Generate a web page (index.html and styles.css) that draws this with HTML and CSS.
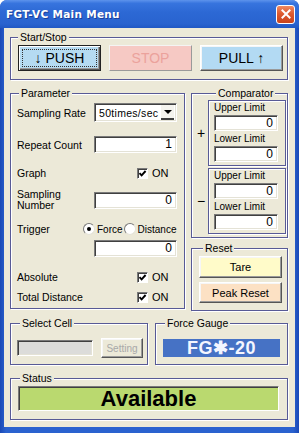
FILE: index.html
```html
<!DOCTYPE html>
<html lang="en">
<head>
  <meta charset="UTF-8" />
  <title>FGT-VC Main Menu</title>
  <link rel="stylesheet" href="styles.css">
</head>
<body>

<div class="window">
  <!-- Title bar -->
  <div class="titlebar">
    <span class="title">FGT-VC Main Menu</span>
    <span class="close-btn">
      <svg viewBox="0 0 18 18" width="16" height="16">
        <path d="M5 5L13 13M13 5L5 13" stroke="#fff" stroke-width="2.2" stroke-linecap="square"/>
      </svg>
    </span>
  </div>

  <div class="client">

    <!-- Start/Stop -->
    <fieldset class="group group-start">
      <legend>Start/Stop</legend>
      <div class="start-row">
        <button class="btn btn-big btn-push"><span class="focus-rect">↓ PUSH</span></button>
        <button class="btn btn-big btn-stop" disabled>STOP</button>
        <button class="btn btn-big btn-pull">PULL ↑</button>
      </div>
    </fieldset>

    <div class="middle">
      <!-- Parameter -->
      <fieldset class="group group-param">
        <legend>Parameter</legend>

        <div class="prow prow-first">
          <span class="plabel">Sampling Rate</span>
          <div class="select">
            <span class="select-val">50times/sec</span>
            <span class="select-arrow"></span>
          </div>
        </div>

        <div class="prow prow-count">
          <span class="plabel">Repeat Count</span>
          <div class="field">1</div>
        </div>

        <div class="prow">
          <span class="plabel">Graph</span>
          <span class="check">
            <span class="checkbox">
              <svg viewBox="0 0 9 9" width="9" height="9"><path d="M1.5 4.2L3.6 6.4L7.6 2" stroke="#000" stroke-width="1.9" fill="none"/></svg>
            </span>ON
          </span>
        </div>

        <div class="prow prow-two">
          <span class="plabel">Sampling<br>Number</span>
          <div class="field">0</div>
        </div>

        <div class="prow prow-trigger">
          <span class="plabel plabel-short">Trigger</span>
          <span class="radio radio-on"></span>
          <span class="radio-text">Force</span>
          <span class="radio"></span>
          <span class="radio-text">Distance</span>
        </div>

        <div class="prow prow-tight">
          <span class="plabel"></span>
          <div class="field">0</div>
        </div>

        <div class="prow">
          <span class="plabel">Absolute</span>
          <span class="check">
            <span class="checkbox">
              <svg viewBox="0 0 9 9" width="9" height="9"><path d="M1.5 4.2L3.6 6.4L7.6 2" stroke="#000" stroke-width="1.9" fill="none"/></svg>
            </span>ON
          </span>
        </div>

        <div class="prow prow-last">
          <span class="plabel">Total Distance</span>
          <span class="check">
            <span class="checkbox">
              <svg viewBox="0 0 9 9" width="9" height="9"><path d="M1.5 4.2L3.6 6.4L7.6 2" stroke="#000" stroke-width="1.9" fill="none"/></svg>
            </span>ON
          </span>
        </div>
      </fieldset>

      <div class="side">
        <!-- Comparator -->
        <fieldset class="group group-comp">
          <legend>Comparator</legend>
          <div class="comp-row">
            <span class="comp-sign">+</span>
            <div class="comp-box">
              <span class="comp-label">Upper Limit</span>
              <div class="field field-small">0</div>
              <span class="comp-label">Lower Limit</span>
              <div class="field field-small">0</div>
            </div>
          </div>
          <div class="comp-row">
            <span class="comp-sign">−</span>
            <div class="comp-box">
              <span class="comp-label">Upper Limit</span>
              <div class="field field-small">0</div>
              <span class="comp-label">Lower Limit</span>
              <div class="field field-small">0</div>
            </div>
          </div>
        </fieldset>

        <!-- Reset -->
        <fieldset class="group group-reset">
          <legend>Reset</legend>
          <button class="btn btn-reset btn-tare">Tare</button>
          <button class="btn btn-reset btn-peak">Peak Reset</button>
        </fieldset>
      </div>
    </div>

    <div class="bottom">
      <!-- Select Cell -->
      <fieldset class="group group-cell">
        <legend>Select Cell</legend>
        <div class="cell-row">
          <div class="field field-disabled"></div>
          <button class="btn btn-setting" disabled>Setting</button>
        </div>
      </fieldset>

      <!-- Force Gauge -->
      <fieldset class="group group-gauge">
        <legend>Force Gauge</legend>
        <div class="gauge">FG✱-20</div>
      </fieldset>
    </div>

    <!-- Status -->
    <fieldset class="group group-status">
      <legend>Status</legend>
      <div class="status-box">Available</div>
    </fieldset>

  </div>
</div>

</body>
</html>
```

FILE: styles.css
```css
* { box-sizing: border-box; margin: 0; padding: 0; }
body {
  margin: 0;
  background: #fff;
  font-family: 'Liberation Sans', Arial, sans-serif;
  font-size: 10px;
  color: #000;
}

/* WINDOW */
.window {
  width: 299px;
  height: 433px;
  display: flex;
  flex-direction: column;
  background: linear-gradient(90deg, #1a49b6 0%, #2a62cf 2%, #2a62cf 98%, #1a49b6 100%);
  border-radius: 7px 7px 0 0;
  overflow: hidden;
}
.titlebar {
  height: 28px;
  flex: none;
  display: flex;
  align-items: center;
  justify-content: space-between;
  padding: 0 4px 0 6px;
  background: linear-gradient(180deg, #5d93ec 0%, #3774de 12%, #2c68d4 45%, #2963cf 85%, #2058c4 100%);
}
.title {
  color: #fff;
  font-family: 'DejaVu Sans', sans-serif;
  font-weight: bold;
  font-size: 10.5px;
  letter-spacing: 0.3px;
  text-shadow: 1px 1px 0 #1a3f99;
}
.close-btn {
  width: 19px;
  height: 19px;
  display: flex;
  align-items: center;
  justify-content: center;
  border: 1px solid #fff;
  border-radius: 3px;
  background: linear-gradient(180deg, #f08a62 0%, #dd5a30 45%, #c8431c 100%);
}

.client {
  flex: 1;
  margin: 0 4px 6px;
  padding: 3px 7px 0 6px;
  background: #ECE9D8;
}

/* GROUP BOXES */
.group {
  border: 1px solid #585a96;
  box-shadow: inset 1px 1px 0 #fff, 1px 1px 0 #fff;
  min-width: 0;
}
.group legend {
  padding: 0 2px;
  font-size: 10.5px;
  line-height: 13px;
  background: #ECE9D8;
}

.group-start {
  padding: 1px 4px 8px 7px;
}
.start-row {
  display: grid;
  grid-template-columns: repeat(3, 83px);
  gap: 8px;
}

/* BUTTONS */
.btn {
  font-family: inherit;
  font-size: 11px;
  color: #000;
  border: 1px solid;
  border-color: #fff #555 #555 #fff;
  box-shadow: inset -1px -1px 0 #9a9a9a, inset 1px 1px 0 #f6f6f6;
  cursor: pointer;
}
.btn-big {
  height: 26px;
  font-size: 14px;
  display: flex;
  align-items: center;
  justify-content: center;
}
.btn-push {
  background: #B5DBF2;
  border: 1px solid #222;
  box-shadow: inset 1px 1px 0 #fff, inset -1px -1px 0 #555, inset -2px -2px 0 #999;
  padding: 3px;
}
.focus-rect {
  flex: 1;
  align-self: stretch;
  display: flex;
  align-items: center;
  justify-content: center;
  border: 1px dotted #333;
}
.btn-stop {
  background: #F6C9C4;
  color: #EBA29C;
  border-color: #f4f4f4 #9a9a9a #9a9a9a #f4f4f4;
  box-shadow: none;
}
.btn-pull {
  background: #B3DAF3;
}

/* LAYOUT ROWS */
.middle {
  display: flex;
  align-items: flex-start;
  gap: 6px;
  margin-top: 7px;
}
.group-param {
  width: 175px;
  flex: none;
  padding: 0 6px 3px 6px;
}
.group-param legend { margin-left: 2px; }

.side {
  flex: 1;
  display: flex;
  flex-direction: column;
  gap: 4px;
}

/* PARAMETER */
.prow {
  display: flex;
  align-items: center;
  height: 16px;
  margin-top: 12px;
}
.prow-first { margin-top: 3px; height: 19px; }
.prow-count { margin-top: 14px; height: 17px; }
.prow-two { margin-top: 7px; height: 24px; line-height: 11px; }
.prow-trigger { margin-top: 9px; }
.prow-tight { margin-top: 3px; height: 17px; }
.prow-last { margin-top: 4px; }

.plabel {
  width: 77px;
  flex: none;
  font-size: 10.5px;
}
.plabel-short { width: 66px; }

.field {
  width: 83px;
  height: 17px;
  background: #fff;
  border: 1px solid;
  border-color: #7a7a7a #fff #fff #7a7a7a;
  box-shadow: inset 1px 1px 0 #404040, inset -1px -1px 0 #e4e2d6;
  text-align: right;
  padding: 0 4px;
  font-size: 12px;
  line-height: 15px;
}

.select {
  width: 83px;
  height: 19px;
  display: flex;
  align-items: center;
  justify-content: flex-end;
  background: #fff;
  border: 1px solid;
  border-color: #7a7a7a #fff #fff #7a7a7a;
  box-shadow: inset 1px 1px 0 #404040, inset -1px -1px 0 #e4e2d6;
  padding: 2px 2px 2px 4px;
  gap: 3px;
}
.select-val { font-size: 10.5px; letter-spacing: 0.3px; }
.select-arrow {
  position: relative;
  width: 13px;
  height: 15px;
  background: #f4f3ee;
  border-bottom: 2px solid #404040;
}
.select-arrow::after {
  content: '';
  position: absolute;
  left: 3px;
  top: 5px;
  border-left: 4px solid transparent;
  border-right: 4px solid transparent;
  border-top: 4px solid #000;
}

.check {
  display: flex;
  align-items: center;
  gap: 4px;
  margin-left: 43px;
  font-size: 11px;
}
.checkbox {
  width: 11px;
  height: 11px;
  display: flex;
  align-items: center;
  justify-content: center;
  background: #fff;
  border: 1px solid;
  border-color: #7a7a7a #fff #fff #7a7a7a;
  box-shadow: inset 1px 1px 0 #404040;
}

.radio {
  width: 12px;
  height: 12px;
  border-radius: 50%;
  background: #fff;
  border: 1px solid;
  border-color: #7a7a7a #e4e2d6 #e4e2d6 #7a7a7a;
  display: flex;
  align-items: center;
  justify-content: center;
  flex: none;
}
.radio-on::after {
  content: '';
  width: 4px;
  height: 4px;
  border-radius: 50%;
  background: #000;
}
.radio-text {
  margin: 0 1px 0 2px;
  font-size: 10px;
}

/* COMPARATOR */
.group-comp {
  padding: 0 1px 3px 2px;
  display: flex;
  flex-direction: column;
  gap: 2px;
}
.group-comp legend { margin-left: 22px; }
.comp-row {
  display: flex;
  align-items: center;
}
.comp-sign {
  width: 14px;
  text-align: center;
  font-size: 14px;
}
.comp-box {
  flex: 1;
  height: 66px;
  display: flex;
  flex-direction: column;
  justify-content: space-between;
  padding: 0 6px 3px 5px;
  border: 1px solid #585a96;
  box-shadow: inset 1px 1px 0 #fff, 1px 1px 0 #fff;
}
.comp-label { line-height: 13px; font-size: 10px; }
.field-small {
  width: 64px;
  height: 16px;
  line-height: 14px;
}

/* RESET */
.group-reset {
  padding: 1px 5px 7px 7px;
  display: flex;
  flex-direction: column;
  gap: 4px;
}
.group-reset legend { margin-left: 4px; }
.btn-reset {
  width: 83px;
  height: 22px;
  font-size: 11px;
}
.btn-tare { background: #FFFBC9; }
.btn-peak { background: #FCE1C4; height: 21px; }

/* BOTTOM */
.bottom {
  display: flex;
  gap: 7px;
  margin-top: 6px;
}
.group-cell {
  width: 138px;
  flex: none;
  padding: 8px 4px 6px 6px;
}
.group-cell legend { margin-left: 3px; }
.cell-row {
  display: flex;
  align-items: center;
  height: 20px;
  gap: 8px;
}
.field-disabled {
  width: 76px;
  height: 16px;
  background: #DCDCDA;
}
.btn-setting {
  width: 42px;
  height: 20px;
  font-size: 10px;
  background: #ECE9D8;
  color: #a8a8a8;
  cursor: default;
}

.group-gauge {
  flex: 1;
  padding: 9px 7px 7px 7px;
}
.group-gauge legend { margin-left: 2px; }
.gauge {
  height: 18px;
  background: #4672C5;
  color: #f4f6ff;
  font-weight: bold;
  font-size: 18px;
  line-height: 18px;
  text-align: center;
  letter-spacing: 0.5px;
}

/* STATUS */
.group-status {
  margin-top: 7px;
  padding: 1px 8px 8px 7px;
}
.group-status legend { margin-left: 2px; }
.status-box {
  height: 25px;
  background: #BAD96F;
  border: 1px solid;
  border-color: #7a7a7a #fff #fff #7a7a7a;
  box-shadow: inset 1px 1px 0 #404040;
  font-weight: bold;
  font-size: 22px;
  line-height: 23px;
  text-align: center;
}
```
